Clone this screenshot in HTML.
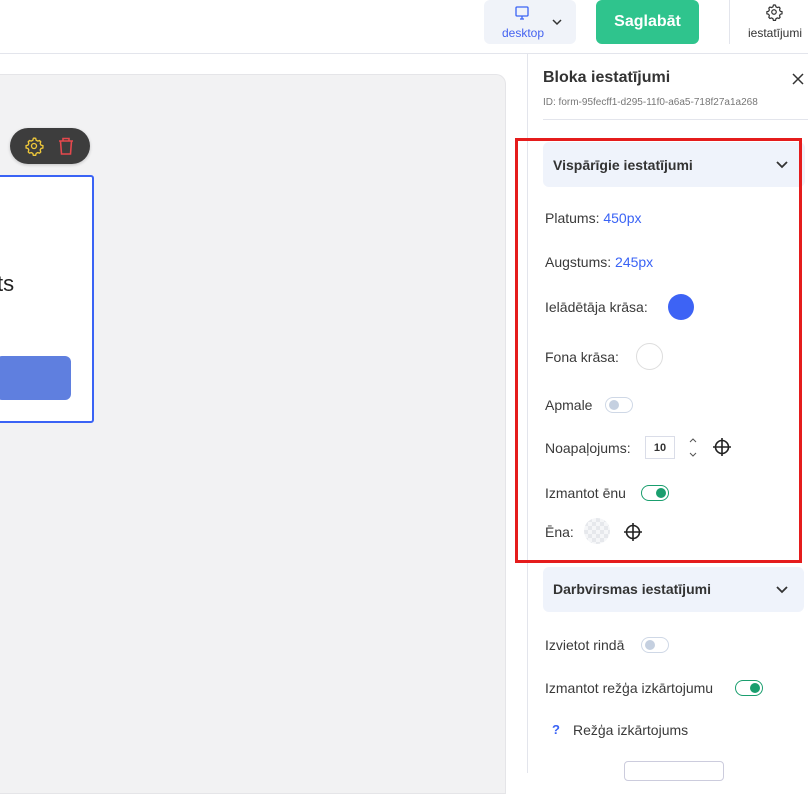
<!DOCTYPE html><html><head><meta charset="utf-8"><style>
*{box-sizing:border-box;margin:0;padding:0}
body{width:808px;height:773px;overflow:hidden;background:#fff;font-family:"Liberation Sans",sans-serif;color:#333;position:relative}
.a{position:absolute}
.lbl{font-size:14px;color:#3a3a3a}
.tg{position:absolute;width:28px;height:16px;border-radius:8px;border:1px solid #cfd8e6;background:#fff}
.tg i{position:absolute;top:2px;left:3px;width:10px;height:10px;border-radius:50%;background:#c5d0e0}
.tg.on{border-color:#1a9e6e}
.tg.on i{left:14px;background:#1a9e6e}
</style></head><body>
<div class="a" style="left:0;top:53px;width:808px;height:1px;background:#e3e5ec"></div>
<div class="a" style="left:484px;top:0;width:92px;height:44px;background:#f0f3f9;border-radius:6px"></div>
<svg class="a" style="left:514px;top:5px" width="16" height="16" viewBox="0 0 16 16" fill="none" stroke="#3a63f5" stroke-width="1.3"><rect x="2" y="2" width="12" height="9" rx="1"/><path d="M6 14h4M8 11v3"/></svg>
<div class="a" style="left:502px;top:26px;font-size:12px;color:#4563f0">desktop</div>
<svg class="a" style="left:551px;top:17px" width="12" height="10" viewBox="0 0 12 10" fill="none" stroke="#333" stroke-width="1.5"><path d="M2 3l4 4 4-4"/></svg>
<div class="a" style="left:596px;top:0;width:103px;height:44px;background:#2fc48d;border-radius:6px;color:#fff;font-weight:bold;font-size:16px;text-align:center;line-height:44px">Saglabāt</div>
<div class="a" style="left:729px;top:0;width:1px;height:44px;background:#e3e5ec"></div>
<svg class="a" style="left:765px;top:3px" width="18" height="18" viewBox="0 0 24 24" fill="none" stroke="#333" stroke-width="1.6"><circle cx="12" cy="12" r="3"/><path d="M12 2.5l2 .3.6 2.3 1.8 1 2.3-.7 1.4 1.5-.7 2.3 1 1.8 2.3.6v2.8l-2.3.6-1 1.8.7 2.3-1.4 1.5-2.3-.7-1.8 1-.6 2.3h-2.8l-.6-2.3-1.8-1-2.3.7-1.4-1.5.7-2.3-1-1.8-2.3-.6v-2.8l2.3-.6 1-1.8-.7-2.3 1.4-1.5 2.3.7 1.8-1 .6-2.3z"/></svg>
<div class="a" style="left:748px;top:26px;font-size:12px;color:#333">iestatījumi</div>

<div class="a" style="left:0;top:74px;width:506px;height:720px;background:#f2f2f3;border:1px solid #e5e5e8;border-left:none;border-radius:0 10px 0 0"></div>
<div class="a" style="left:10px;top:128px;width:80px;height:36px;background:#3d3d3d;border-radius:18px;box-shadow:0 1px 3px rgba(0,0,0,.2)"></div>
<svg class="a" style="left:24px;top:136px" width="20" height="20" viewBox="0 0 24 24" fill="none" stroke="#f0c93a" stroke-width="1.6"><circle cx="12" cy="12" r="3"/><path d="M12 2.5l2 .3.6 2.3 1.8 1 2.3-.7 1.4 1.5-.7 2.3 1 1.8 2.3.6v2.8l-2.3.6-1 1.8.7 2.3-1.4 1.5-2.3-.7-1.8 1-.6 2.3h-2.8l-.6-2.3-1.8-1-2.3.7-1.4-1.5.7-2.3-1-1.8-2.3-.6v-2.8l2.3-.6 1-1.8-.7-2.3 1.4-1.5 2.3.7 1.8-1 .6-2.3z"/></svg>
<svg class="a" style="left:57px;top:136px" width="18" height="20" viewBox="0 0 18 20" fill="none" stroke="#e5484d" stroke-width="1.6"><path d="M2 5h14M6 5V2.5h6V5M3.5 5l1 13h9l1-13"/></svg>
<div class="a" style="left:-4px;top:175px;width:98px;height:248px;background:#fff;border:2px solid #3a63f5;border-radius:3px"></div>
<div class="a" style="left:-3px;top:271px;font-size:22px;color:#222">ts</div>
<div class="a" style="left:-4px;top:356px;width:75px;height:44px;background:#5f7fdf;border-radius:6px"></div>

<div class="a" style="left:527px;top:54px;width:1px;height:719px;background:#e3e5ec"></div>
<div class="a" style="left:543px;top:69px;font-size:16px;font-weight:bold;color:#333">Bloka iestatījumi</div>
<svg class="a" style="left:792px;top:73px" width="12" height="12" viewBox="0 0 12 12" stroke="#333" stroke-width="1.5"><path d="M1 1l10 10M11 1L1 11"/></svg>
<div class="a" style="left:543px;top:97px;font-size:10px;color:#777">ID: form-95fecff1-d295-11f0-a6a5-718f27a1a268</div>
<div class="a" style="left:543px;top:119px;width:265px;height:1px;background:#e3e5ec"></div>

<div class="a" style="left:543px;top:142px;width:262px;height:45px;background:#eff3fb;border-radius:6px"></div>
<div class="a" style="left:553px;top:157px;font-size:14px;font-weight:bold;color:#333">Vispārīgie iestatījumi</div>
<svg class="a" style="left:775px;top:160px" width="14" height="10" viewBox="0 0 14 10" fill="none" stroke="#333" stroke-width="1.8"><path d="M2 2l5 5 5-5"/></svg>
<div class="a lbl" style="left:545px;top:210px">Platums: <span style="color:#3a63f5">450px</span></div>
<div class="a lbl" style="left:545px;top:254px">Augstums: <span style="color:#3a63f5">245px</span></div>
<div class="a lbl" style="left:545px;top:299px">Ielādētāja krāsa:</div>
<div class="a" style="left:668px;top:294px;width:26px;height:26px;border-radius:50%;background:#3d63f5"></div>
<div class="a lbl" style="left:545px;top:349px">Fona krāsa:</div>
<div class="a" style="left:636px;top:343px;width:27px;height:27px;border-radius:50%;background:#fff;border:1px solid #ddd"></div>
<div class="a lbl" style="left:545px;top:397px">Apmale</div>
<div class="tg" style="left:605px;top:397px"><i></i></div>
<div class="a lbl" style="left:545px;top:440px">Noapaļojums:</div>
<div class="a" style="left:645px;top:436px;width:30px;height:23px;border:1px solid #dadde8;font-size:11px;font-weight:bold;text-align:center;line-height:22px">10</div>
<svg class="a" style="left:688px;top:437px" width="10" height="22" viewBox="0 0 10 22" fill="none" stroke="#555" stroke-width="1"><path d="M2 5l3-3 3 3M2 16l3 3 3-3"/></svg>
<svg class="a" style="left:712px;top:437px" width="20" height="20" viewBox="0 0 20 20" fill="none" stroke="#222" stroke-width="1.6"><circle cx="10" cy="10" r="6.5"/><path d="M10 1v18M1 10h18"/></svg>
<div class="a lbl" style="left:545px;top:485px">Izmantot ēnu</div>
<div class="tg on" style="left:641px;top:485px"><i></i></div>
<div class="a lbl" style="left:545px;top:524px">Ēna:</div>
<div class="a" style="left:584px;top:518px;width:26px;height:26px;border-radius:50%;background:repeating-conic-gradient(#e6e8ec 0 25%,#f5f6f8 0 50%) 0 0/8px 8px"></div>
<svg class="a" style="left:623px;top:522px" width="20" height="20" viewBox="0 0 20 20" fill="none" stroke="#222" stroke-width="1.6"><circle cx="10" cy="10" r="6.5"/><path d="M10 1v18M1 10h18"/></svg>

<div class="a" style="left:515px;top:138px;width:287px;height:425px;border:3px solid #e51c1c"></div>

<div class="a" style="left:543px;top:567px;width:261px;height:45px;background:#eff3fb;border-radius:6px"></div>
<div class="a" style="left:553px;top:581px;font-size:14px;font-weight:bold;color:#333">Darbvirsmas iestatījumi</div>
<svg class="a" style="left:775px;top:585px" width="14" height="10" viewBox="0 0 14 10" fill="none" stroke="#333" stroke-width="1.8"><path d="M2 2l5 5 5-5"/></svg>
<div class="a lbl" style="left:545px;top:637px">Izvietot rindā</div>
<div class="tg" style="left:641px;top:637px"><i></i></div>
<div class="a lbl" style="left:545px;top:680px">Izmantot režģa izkārtojumu</div>
<div class="tg on" style="left:735px;top:680px"><i></i></div>
<div class="a" style="left:552px;top:722px;font-size:13px;font-weight:bold;color:#3a63f5">?</div>
<div class="a lbl" style="left:573px;top:722px">Režģa izkārtojums</div>
<div class="a" style="left:624px;top:761px;width:100px;height:20px;border:1px solid #ccd;border-radius:4px"></div>
</body></html>
